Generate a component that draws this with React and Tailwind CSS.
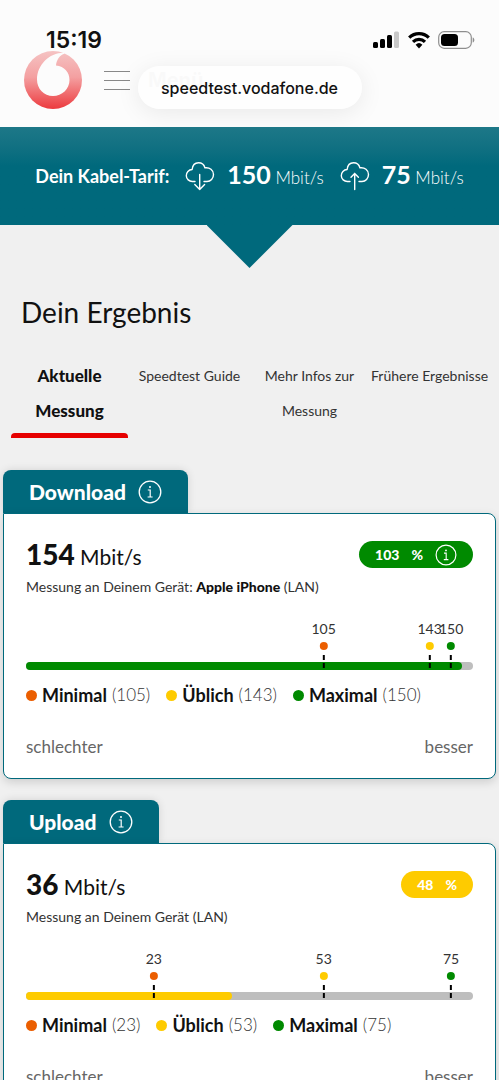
const downloadData = {
  title: "Download",
  value: "154",
  device: "Apple iPhone",
  percent: "103",
  percentInfo: true,
  color: "bg-[#008a00]",
  fill: 97.6,
  limits: [
    { name: "Minimal", value: "105", pos: 66.6, dot: "bg-[#eb5e00]" },
    { name: "Üblich", value: "143", pos: 90.3, dot: "bg-[#fecb00]" },
    { name: "Maximal", value: "150", pos: 95.1, dot: "bg-[#008a00]" },
  ],
};

const uploadData = {
  title: "Upload",
  value: "36",
  percent: "48",
  color: "bg-[#fecb00]",
  fill: 46,
  limits: [
    { name: "Minimal", value: "23", pos: 28.6, dot: "bg-[#eb5e00]" },
    { name: "Üblich", value: "53", pos: 66.6, dot: "bg-[#fecb00]" },
    { name: "Maximal", value: "75", pos: 95.1, dot: "bg-[#008a00]" },
  ],
};

const tabs = [
  "Aktuelle Messung",
  "Speedtest Guide",
  "Mehr Infos zur Messung",
  "Frühere Ergebnisse",
];

/* ================= ICONS ================= */

const InfoIcon = ({ className }) => (
  <svg viewBox="0 0 24 24" fill="none" stroke="currentColor" className={className}>
    <circle cx="12" cy="12" r="10.8" strokeWidth="1.300" />
    <path d="M9.800 10h2.400v7M9.600 17h5" strokeWidth="1.200" />
    <circle cx="12" cy="7" r="1" fill="currentColor" stroke="none" />
  </svg>
);

const CloudIcon = ({ up }) => (
  <svg
    viewBox="0 0 30 30"
    fill="none"
    stroke="currentColor"
    strokeWidth="1.400"
    strokeLinecap="round"
    strokeLinejoin="round"
    className="w-[30px] h-[30px] shrink-0"
  >
    <path d="M10 20.500H7.500a6 6 0 0 1-.4-12C7.600 4.300 10 1.800 13.500 1.800c3.300 0 5.600 2 6.400 5 4.800-.7 8.600 2.400 8.600 6.700 0 4-2.900 7-6.500 7H19" />
    {up ? (
      <path d="M14.700 28.500V12.500M11 16.300l3.700-3.800 3.700 3.800" />
    ) : (
      <path d="M14.700 13.500v15M9.800 23.500l4.900 5 4.900-5" />
    )}
  </svg>
);

const Logo = () => (
  <svg viewBox="0 0 58 58" className="w-[58px] h-[58px]">
    <defs>
      <linearGradient id="logoRed" x1="0" y1="0" x2="0" y2="1">
        <stop offset="0" stopColor="#f5c3c3" />
        <stop offset="0.450" stopColor="#f4a0a1" />
        <stop offset="1" stopColor="#ec3a3e" />
      </linearGradient>
    </defs>
    <circle cx="29" cy="29" r="29" fill="url(#logoRed)" />
    <path
      d="M39.500 1.800C25 2 13 14 13 28.500 13 38 20 45 29 45s16.500-7 16.500-16c0-8-5-13.500-13.500-14.500C32.500 9 35.500 4 41 2.500Z"
      fill="#fcfcfc"
    />
  </svg>
);

/* ================= HEADER ================= */

const StatusBar = () => (
  <div className="absolute inset-x-0 top-0 flex items-center justify-between pl-[46px] pr-6 pt-6">
    <span className="text-[23px] leading-8 font-semibold">15:19</span>
    <div className="flex items-center gap-2">
      <svg viewBox="0 0 27 18" className="w-[27px] h-[18px]">
        <rect x="0" y="11" width="5" height="6" rx="1.500" />
        <rect x="7" y="8" width="5" height="9" rx="1.500" />
        <rect x="14" y="4" width="5" height="13" rx="1.500" />
        <rect x="21" y="0.500" width="5" height="16.500" rx="1.500" fill="#c8c8c8" />
      </svg>
      <svg viewBox="0 0 22 17" className="w-[22px] h-[17px]">
        <g fill="none" stroke="#000" strokeWidth="3.200">
          <path d="M1.200 5.700a14 14 0 0 1 19.600 0" />
          <path d="M5 9.800a8.600 8.600 0 0 1 12 0" />
        </g>
        <path d="M7.600 12.700a5 5 0 0 1 6.800 0L11 16.500Z" />
      </svg>
      <svg viewBox="0 0 37 18" className="w-[37px] h-[18px]">
        <rect x="0.700" y="0.700" width="32.600" height="16.600" rx="5.500" fill="none" stroke="#8e8e8e" strokeWidth="1.200" />
        <rect x="3" y="3" width="17" height="12" rx="3.500" />
        <path d="M34.700 6.500c2.200.6 2.200 4.400 0 5Z" fill="#8e8e8e" />
      </svg>
    </div>
  </div>
);

const Header = () => (
  <header className="relative shrink-0 bg-[#fcfcfc] font-[Inter,sans-serif]">
    <div className="flex items-center pl-6 pt-[51px] pb-[18px]">
      <a href="#start" aria-label="Vodafone">
        <Logo />
      </a>
      <button className="flex items-center gap-[18px] ml-[22px]">
        <span className="flex flex-col gap-2 w-[26px]">
          <span className="h-px bg-[#888]" />
          <span className="h-px bg-[#888]" />
          <span className="h-px bg-[#888]" />
        </span>
        <span className="text-xl leading-6 font-bold text-[#ececec]">Menü</span>
      </button>
    </div>

    <StatusBar />

    {/* browser address pill */}
    <div className="absolute inset-x-0 bottom-[18px] flex justify-center">
      <div className="w-[224px] h-[43px] rounded-full bg-white/70 shadow-[0_4px_24px_rgba(0,0,0,0.08)] flex items-center justify-center text-base font-medium">
        speedtest.vodafone.de
      </div>
    </div>
  </header>
);

/* ================= TARIFF ================= */

const TariffValue = ({ value }) => (
  <span className="whitespace-nowrap text-[17px] leading-8 font-light">
    <b className="text-[25px] font-bold">{value}</b> Mbit/s
  </span>
);

const Tariff = () => (
  <section className="relative shrink-0 h-[98px] bg-linear-to-b from-[#1d7888] to-[#00697c] to-40% text-white flex items-center justify-center gap-4">
    <span className="text-lg font-bold whitespace-nowrap">Dein Kabel-Tarif:</span>
    <div className="flex items-center gap-3">
      <CloudIcon />
      <TariffValue value="150" />
    </div>
    <div className="flex items-center gap-3">
      <CloudIcon up />
      <TariffValue value="75" />
    </div>
    <div className="absolute top-full left-1/2 -translate-x-1/2 w-[86px] h-[43px] bg-[#00697c] [clip-path:polygon(0_0,100%_0,50%_100%)]" />
  </section>
);

/* ================= RESULT CARD ================= */

const ResultCard = ({ data }) => (
  <section className="mb-[21px]">
    <h2 className="w-fit h-[43px] pl-[26px] pr-[26px] flex items-center gap-3 rounded-t-lg bg-[#00697c] text-white text-[21px] font-black shadow-[0_0_8px_rgba(0,0,0,0.12)]">
      {data.title}
      <button aria-label={`Info ${data.title}`}>
        <InfoIcon className="w-6 h-6" />
      </button>
    </h2>

    <div className="bg-white border border-[#00697c] rounded-lg rounded-tl-none px-[22px] pt-6 pb-[17px] shadow-[0_3px_10px_rgba(0,0,0,0.15)]">
      <div className="flex items-start justify-between">
        <p className="text-[21px] leading-8">
          <b className="text-[28px] font-black">{data.value}</b> Mbit/s
        </p>
        <div
          className={`h-[27px] mt-[3px] px-4 rounded-full flex items-center gap-3 text-white text-sm font-black ${data.color}`}
        >
          <span>{data.percent}</span>
          <span>%</span>
          {data.percentInfo && (
            <button aria-label="Info Prozent">
              <InfoIcon className="w-[22px] h-[22px]" />
            </button>
          )}
        </div>
      </div>

      <p className="text-sm leading-6 mt-0.5 text-[#333]">
        Messung an Deinem Gerät{data.device && ": "}
        {data.device && <b className="font-black text-[#111]">{data.device}</b>} (LAN)
      </p>

      {/* SCALE */}
      <div className="relative pt-[63px]">
        <div className="h-2 rounded-full bg-[#bebebe]">
          <div
            className={`h-2 rounded-full ${data.color}`}
            style={{ width: `${data.fill}%` }}
          />
        </div>
        {data.limits.map((limit) => (
          <div
            key={limit.name}
            className="absolute bottom-0 -translate-x-1/2 flex flex-col items-center"
            style={{ left: `${limit.pos}%` }}
          >
            <span className="text-sm leading-5 text-[#333]">{limit.value}</span>
            <span className={`w-2 h-2 rounded-full mt-[3px] ${limit.dot}`} />
            <span className="mt-[5px] h-[5px] w-0.5 bg-black" />
            <span className="mt-[3px] mb-0.5 h-[5px] w-0.5 bg-black" />
          </div>
        ))}
      </div>

      {/* LEGEND */}
      <ul className="flex gap-4 mt-3 text-[17px] leading-[26px] font-light text-[#333]">
        {data.limits.map((limit) => (
          <li key={limit.name} className="flex items-center gap-[5px]">
            <span className={`w-[11px] h-[11px] rounded-full ${limit.dot}`} />
            <b className="text-lg leading-[26px] font-bold text-[#111]">{limit.name}</b>
            <span>({limit.value})</span>
          </li>
        ))}
      </ul>

      <div className="flex justify-between mt-[25px] text-[17px] leading-7 text-[#666]">
        <span>schlechter</span>
        <span>besser</span>
      </div>
    </div>
  </section>
);

/* ================= PAGE ================= */

const App = () => {
  return (
    <div className="h-screen overflow-hidden flex flex-col bg-[#f0f0f0] text-[#111] font-[Lato,sans-serif]">
      <Header />
      <Tariff />

      <main className="shrink-0 px-[3px] pt-[66px]">
        <h1 className="pl-[18px] text-[28px] leading-[42px]">Dein Ergebnis</h1>

        <nav className="grid grid-cols-4 gap-x-[3px] px-2 pt-[25px] pb-8 text-center text-sm leading-[35px] text-[#333]">
          {tabs.map((tab, index) => (
            <a
              key={tab}
              href="#tab"
              className={
                index === 0
                  ? "px-4 pb-[10px] text-[17px] leading-[35px] font-black text-[#111] relative after:absolute after:inset-x-0 after:bottom-0 after:h-[5px] after:rounded-t-sm after:bg-[#e60000]"
                  : index === 3
                    ? "whitespace-nowrap"
                    : "px-1"
              }
            >
              {tab}
            </a>
          ))}
        </nav>

        <ResultCard data={downloadData} />
        <ResultCard data={uploadData} />
      </main>
    </div>
  );
};

export default App;
